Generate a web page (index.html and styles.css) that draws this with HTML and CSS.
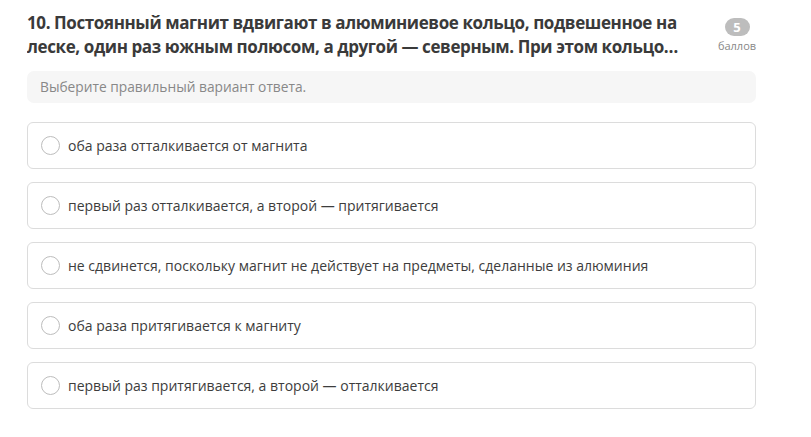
FILE: index.html
```html
<!DOCTYPE html>
<html lang="ru">
<head>
<meta charset="utf-8">
<link rel="stylesheet" href="styles.css">
</head>
<body>
<div class="question">
  <div class="header">
    <h2 class="title">10. Постоянный магнит вдвигают в алюминиевое кольцо, подвешенное на леске, один раз южным полюсом, а другой — северным. При этом кольцо…</h2>
    <div class="points">
      <span class="badge">5</span>
      <span class="points-label">баллов</span>
    </div>
  </div>
  <div class="hint">Выберите правильный вариант ответа.</div>
  <div class="options">
    <label class="option"><span class="radio"></span><span class="option-text">оба раза отталкивается от магнита</span></label>
    <label class="option"><span class="radio"></span><span class="option-text">первый раз отталкивается, а второй — притягивается</span></label>
    <label class="option"><span class="radio"></span><span class="option-text">не сдвинется, поскольку магнит не действует на предметы, сделанные из алюминия</span></label>
    <label class="option"><span class="radio"></span><span class="option-text">оба раза притягивается к магниту</span></label>
    <label class="option"><span class="radio"></span><span class="option-text">первый раз притягивается, а второй — отталкивается</span></label>
  </div>
</div>
</body>
</html>
```

FILE: styles.css
```css
html, body {
  margin: 0;
  padding: 0;
  background: #fff;
}
body {
  font-family: "Open Sans", "Noto Sans", sans-serif;
  color: #333;
}
.question {
  width: 729px;
  padding: 11px 0 0 27px;
}
.header {
  display: flex;
  align-items: flex-start;
}
.title {
  flex: 1;
  margin: 0;
  padding-right: 20px;
  font-size: 17px;
  letter-spacing: -0.4px;
  line-height: 24px;
  font-weight: 700;
  color: #3a3a3a;
  display: -webkit-box;
  -webkit-line-clamp: 2;
  -webkit-box-orient: vertical;
  overflow: hidden;
}
.points {
  width: 38px;
  display: flex;
  flex-direction: column;
  align-items: center;
  padding-top: 7px;
}
.badge {
  width: 25px;
  height: 18px;
  border-radius: 9px;
  background: #bdbdbd;
  color: #fff;
  font-size: 13px;
  font-weight: 700;
  line-height: 18px;
  text-align: center;
}
.points-label {
  font-size: 11px;
  line-height: 14px;
  color: #888;
  margin-top: 3px;
}
.hint {
  margin-top: 12px;
  height: 32px;
  line-height: 32px;
  padding-left: 13px;
  background: #f6f6f6;
  border-radius: 7px;
  font-size: 13.75px;
  color: #888;
}
.options {
  margin-top: 19px;
  display: flex;
  flex-direction: column;
  gap: 13px;
}
.option {
  height: 45px;
  border: 1px solid #dcdcdc;
  border-radius: 6px;
  display: flex;
  align-items: center;
  padding-left: 13px;
  cursor: pointer;
}
.radio {
  width: 17px;
  height: 17px;
  border: 1px solid #bdbdbd;
  border-radius: 50%;
  flex: none;
}
.option-text {
  margin-left: 8px;
  font-size: 14px;
  color: #3d3d3d;
}
```
